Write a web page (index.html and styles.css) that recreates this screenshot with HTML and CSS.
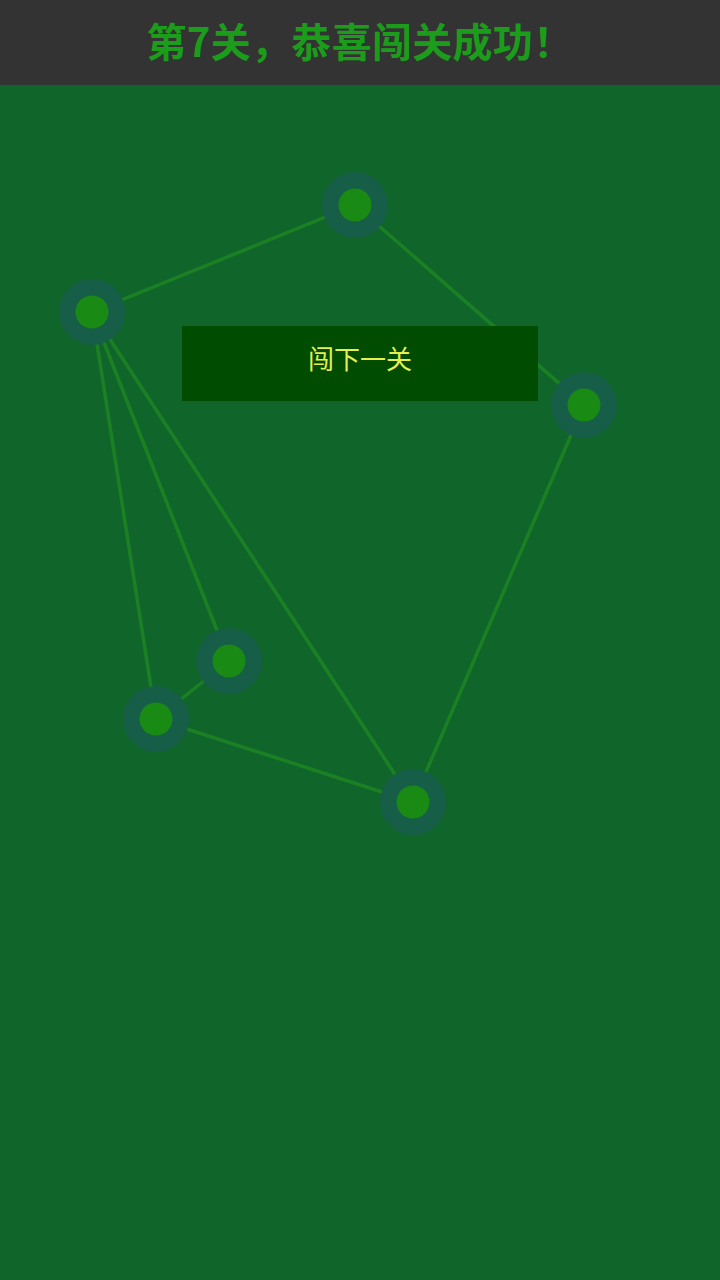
FILE: index.html
```html
<!DOCTYPE html>
<html lang="zh-CN">
<head>
<meta charset="utf-8">
<title>第7关</title>
<link rel="stylesheet" href="styles.css">
</head>
<body>
<header class="top-bar">
  <h1 class="title">第7关，恭喜闯关成功！</h1>
</header>
<main class="board">
  <svg class="graph" width="720" height="1195" viewBox="0 85 720 1195" xmlns="http://www.w3.org/2000/svg">
    <g class="edges">
      <line x1="355" y1="205" x2="92" y2="312"/>
      <line x1="355" y1="205" x2="584" y2="405"/>
      <line x1="92" y1="312" x2="229" y2="661"/>
      <line x1="92" y1="312" x2="156" y2="719"/>
      <line x1="92" y1="312" x2="413" y2="802"/>
      <line x1="156" y1="719" x2="229" y2="661"/>
      <line x1="156" y1="719" x2="413" y2="802"/>
      <line x1="413" y1="802" x2="584" y2="405"/>
    </g>
    <g class="nodes">
      <g transform="translate(355 205)"><circle class="ring" r="33"/><circle class="core" r="16.5"/></g>
      <g transform="translate(92 312)"><circle class="ring" r="33"/><circle class="core" r="16.5"/></g>
      <g transform="translate(584 405)"><circle class="ring" r="33"/><circle class="core" r="16.5"/></g>
      <g transform="translate(229 661)"><circle class="ring" r="33"/><circle class="core" r="16.5"/></g>
      <g transform="translate(156 719)"><circle class="ring" r="33"/><circle class="core" r="16.5"/></g>
      <g transform="translate(413 802)"><circle class="ring" r="33"/><circle class="core" r="16.5"/></g>
    </g>
  </svg>
  <button class="next-btn" type="button">闯下一关</button>
</main>
</body>
</html>
```

FILE: styles.css
```css
html, body {
  margin: 0;
  padding: 0;
}
body {
  width: 720px;
  height: 1280px;
  background: #10662a;
  font-family: "Noto Sans CJK SC", "Noto Sans", sans-serif;
  overflow: hidden;
}
.top-bar {
  box-sizing: border-box;
  height: 85px;
  padding-bottom: 6px;
  background: #333333;
  display: flex;
  align-items: center;
  justify-content: center;
}
.title {
  margin: 0;
  font-size: 40px;
  font-weight: 700;
  color: #1b9c1b;
  line-height: 1;
  letter-spacing: 0.3px;
}
.board {
  position: relative;
  height: 1195px;
  background: #10662a;
}
.graph {
  position: absolute;
  left: 0;
  top: 0;
  display: block;
}
.edges line {
  stroke: #1f8a22;
  stroke-width: 3.5;
  stroke-opacity: 0.75;
}
.ring {
  fill: #165e48;
}
.core {
  fill: #198a14;
}
.next-btn {
  position: absolute;
  left: 182px;
  top: 241px;
  box-sizing: border-box;
  width: 356px;
  height: 75px;
  margin: 0;
  padding: 0 0 12px 0;
  border: none;
  background: #004c00;
  color: #e8f04e;
  font-family: "Noto Sans CJK SC", "Noto Sans", sans-serif;
  font-size: 26px;
  font-weight: 400;
  line-height: 1;
  display: flex;
  align-items: center;
  justify-content: center;
}
```
